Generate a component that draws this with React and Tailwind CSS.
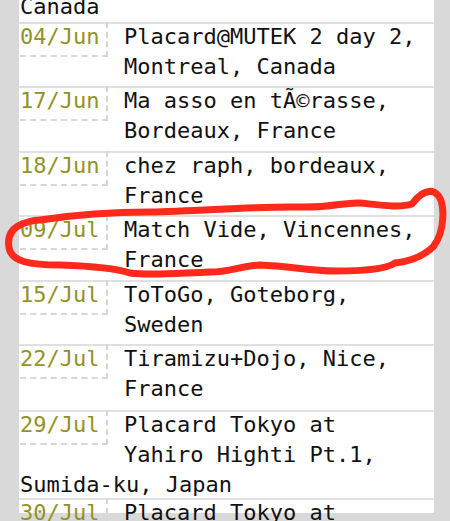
import React from "react";

const gigs = [
  { date: "04/Jun", place: "Placard@MUTEK 2 day 2, Montreal, Canada", h: "h-[64px]" },
  { date: "17/Jun", place: "Ma asso en tÃ©rasse, Bordeaux, France", h: "h-[65px]" },
  { date: "18/Jun", place: "chez raph, bordeaux, France", h: "h-[64px]" },
  { date: "09/Jul", place: "Match Vide, Vincennes, France", h: "h-[65px]" },
  { date: "15/Jul", place: "ToToGo, Goteborg, Sweden", h: "h-[64px]" },
  { date: "22/Jul", place: "Tiramizu+Dojo, Nice, France", h: "h-[66px]" },
  { date: "29/Jul", place: "Placard Tokyo at Yahiro Highti Pt.1, Sumida-ku, Japan", h: "h-[88px]" },
  { date: "30/Jul", place: "Placard Tokyo at Yahiro Highti Pt.2, Sumida-ku, Japan", h: "h-[88px]" },
];

function Gig({ date, place, h }) {
  return (
    <div className={`${h} border-t-2 border-[#e0e0e0] pl-px pr-[12px]`}>
      <div className="-mt-[2px]">
        <span className="float-left w-[88px] h-[35px] mr-[16px] border-r-2 border-b-2 border-dashed border-[#d6d6d6] text-[#939324]">
          {date}
        </span>
        <span className="text-[#111]">{place}</span>
      </div>
    </div>
  );
}

export default function App() {
  return (
    <div className="relative h-[521px] overflow-hidden bg-[#d9d9d9] pl-[19px] pr-[16px]">
      <div className="bg-white h-full text-[22px] leading-[30px] font-['DejaVu_Sans_Mono',monospace]">
        {/* tail of the previous entry, cut off by the top of the window */}
        <div className="-mt-[8px] pl-px text-[#111]">Canada</div>
        {gigs.map((g) => (
          <Gig key={g.date} {...g} />
        ))}
      </div>

      {/* hand-drawn highlight around 09/Jul */}
      <svg className="absolute inset-0 pointer-events-none" width="450" height="521" viewBox="0 0 450 521">
        <path
          d="M 40 220 C 80 214, 120 212, 150 212 C 200 211, 260 206, 300 207 C 330 208, 345 202, 360 203 C 380 205, 400 208, 412 204 C 418 196, 425 189, 434 192 C 447 199, 445 232, 433 247 C 421 258, 405 262, 395 263 C 385 270, 360 271, 335 271 C 310 271, 290 266, 260 265 C 240 266, 230 272, 210 272 C 180 273, 150 276, 130 273 C 115 268, 90 266, 60 265 C 30 265, 12 262, 9 248 C 7 236, 12 228, 22 224 C 30 221, 38 220, 40 220"
          fill="none"
          stroke="#ff2a1c"
          strokeWidth="7"
          strokeLinecap="round"
          strokeLinejoin="round"
        />
      </svg>
    </div>
  );
}
